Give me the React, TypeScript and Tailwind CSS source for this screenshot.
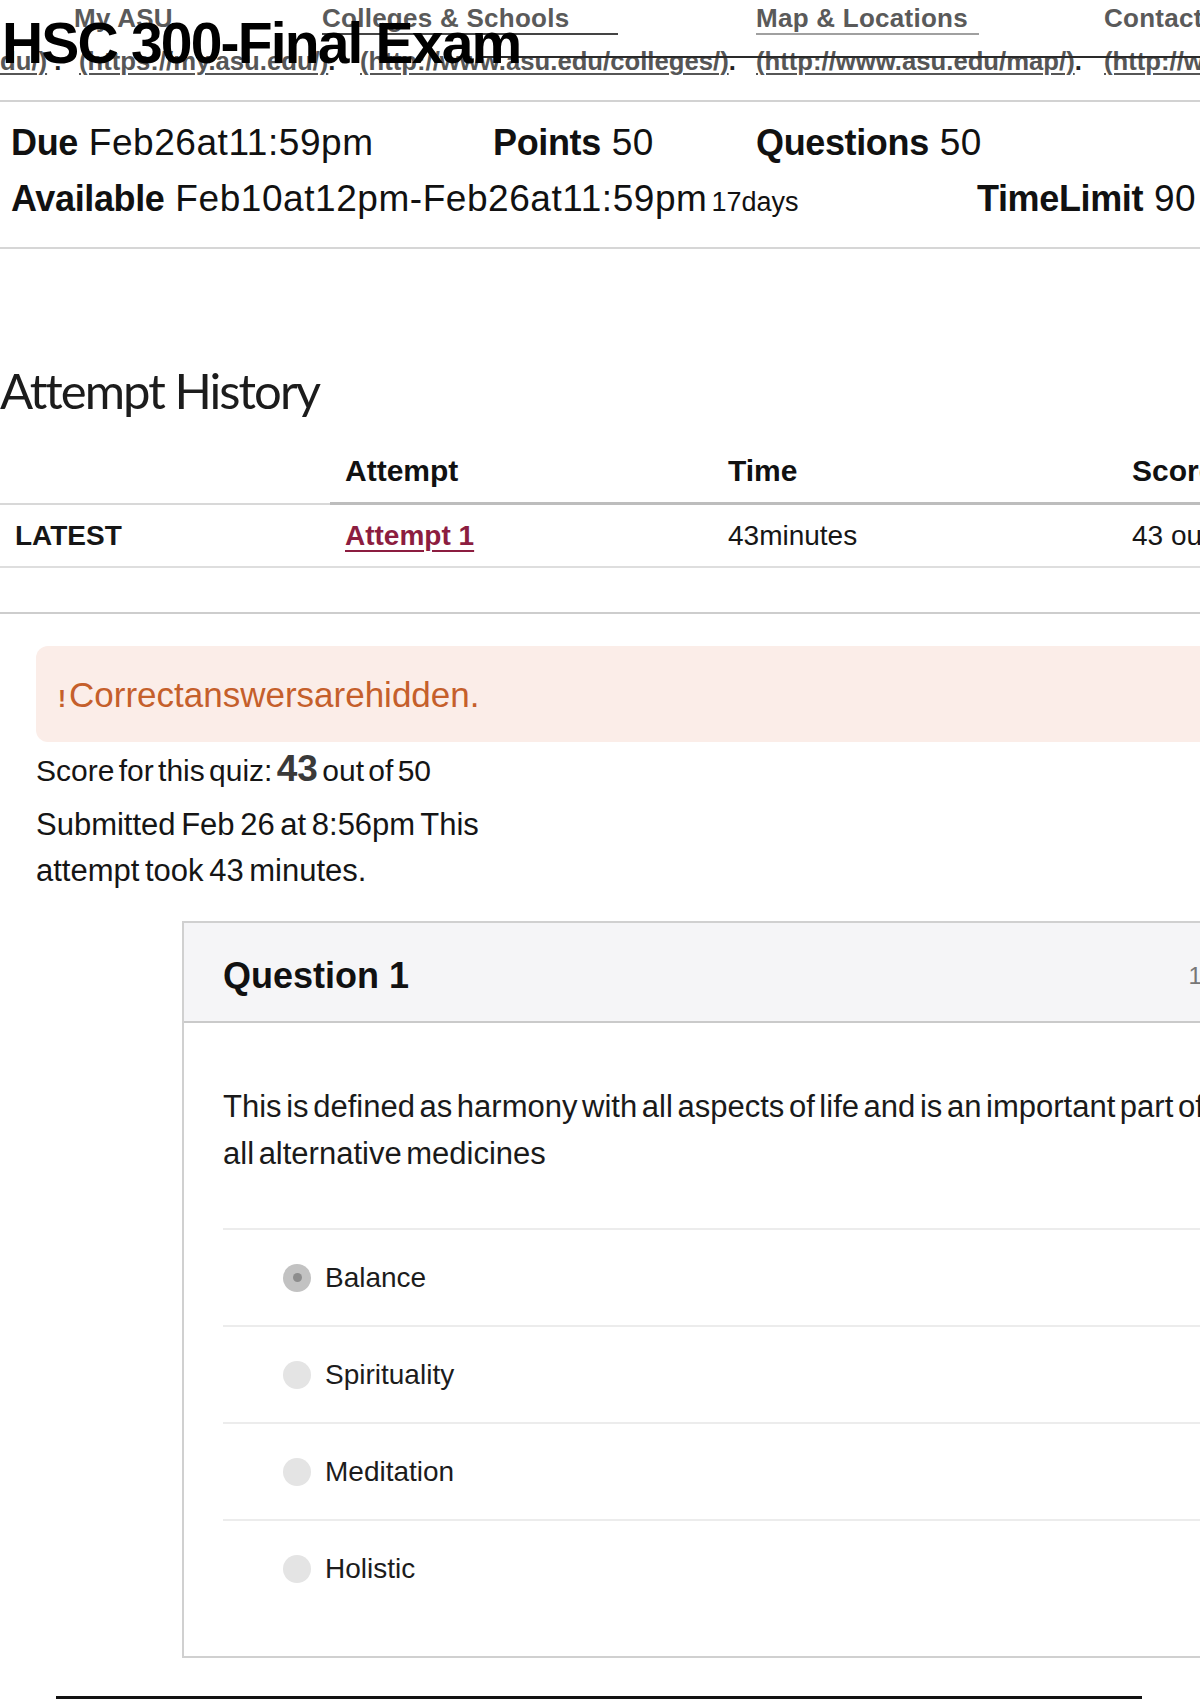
import React from "react";

const sans = "font-['Liberation_Sans',Arial,sans-serif]";

function Header() {
  return (
    <header className="relative h-[102px] border-b-2 border-[#d2d2d2]">
      {/* site navigation labels */}
      <div className="flex pt-[5px] text-[26px] font-bold leading-none tracking-[0.01em] text-[#5a5a5a] whitespace-nowrap">
        <div className="w-[322px] shrink-0 pl-[74px]">My ASU</div>
        <div className="w-[434px] shrink-0">
          <span className="inline-block w-[296px] border-b-2 border-[#444] pb-[2px]">Colleges &amp; Schools</span>
        </div>
        <div className="w-[348px] shrink-0">
          <span className="inline-block w-[223px] border-b-2 border-[#a0a0a0] pb-[2px]">Map &amp; Locations</span>
        </div>
        <div className="shrink-0">Contact</div>
      </div>
      {/* link targets printed under each label */}
      <div className="mt-[14px] flex text-[25.7px] font-bold leading-none text-[#565656] whitespace-nowrap">
        <div className="w-[79px] shrink-0">
          <span className="underline decoration-2 underline-offset-[3px]">du/)</span>
          <span className="text-[#222]"> .</span>
        </div>
        <div className="w-[281px] shrink-0">
          <span className="underline decoration-2 underline-offset-[3px]">(https://my.asu.edu/)</span>
          <span className="text-[#222]">.</span>
        </div>
        <div className="w-[396px] shrink-0">
          <span className="underline decoration-2 underline-offset-[3px]">(http://www.asu.edu/colleges/)</span>
          <span className="text-[#222]">.</span>
        </div>
        <div className="w-[348px] shrink-0">
          <span className="underline decoration-2 underline-offset-[3px]">(http://www.asu.edu/map/)</span>
          <span className="text-[#222]">.</span>
        </div>
        <div className="shrink-0">
          <span className="underline decoration-2 underline-offset-[3px]">(http://www.asu.edu/contactasu/)</span>
        </div>
      </div>
      <div className="absolute left-[480px] right-0 top-[56px] h-[2px] bg-[#2a2a2a]" />
      <h1 className="absolute left-[2px] top-[15px] text-[57px] font-bold leading-none tracking-[-0.032em] text-black whitespace-nowrap">
        HSC 300-Final Exam
      </h1>
    </header>
  );
}

function Details() {
  return (
    <section className="border-b-2 border-[#d6d6d6] pl-[11px] pt-[22px] pb-[30px] text-[37px] leading-none tracking-[0.015em] text-[#111] whitespace-nowrap">
      <div className="flex items-baseline">
        <div className="w-[482px] shrink-0">
          <b className="text-[36px] tracking-[-0.01em]">Due</b> Feb26at11:59pm
        </div>
        <div className="w-[263px] shrink-0">
          <b className="text-[36px] tracking-[-0.01em]">Points</b> 50
        </div>
        <div className="shrink-0">
          <b className="text-[36px] tracking-[-0.01em]">Questions</b> 50
        </div>
      </div>
      <div className="mt-[19px] flex items-baseline">
        <div className="w-[966px] shrink-0">
          <b className="text-[36px] tracking-[-0.01em]">Available</b> Feb10at12pm-Feb26at11:59pm
          <span className="ml-[4px] text-[27px] tracking-normal">17days</span>
        </div>
        <div className="shrink-0">
          <b className="text-[36px] tracking-[-0.01em]">TimeLimit</b> 90 Minutes
        </div>
      </div>
    </section>
  );
}

function AttemptHistory() {
  return (
    <section>
      <h2 className="mt-[117px] font-['Lato',sans-serif] text-[49px] leading-none tracking-[-0.04em] text-[#1c1c1c]">
        Attempt History
      </h2>
      <div className="mt-[24px] whitespace-nowrap">
        <div className="grid grid-cols-[330px_383px_404px_1fr] text-[30px] font-bold leading-none text-[#111]">
          <div className="h-[66px] border-b-2 border-[#d8d8d8]" />
          <div className="flex h-[66px] items-end border-b-[3px] border-[#bdbdbd] pb-[16px] pl-[15px]">Attempt</div>
          <div className="flex h-[66px] items-end border-b-[3px] border-[#bdbdbd] pb-[16px] pl-[15px]">Time</div>
          <div className="flex h-[66px] items-end border-b-[3px] border-[#bdbdbd] pb-[16px] pl-[15px]">Score</div>
        </div>
        <div className="grid h-[63px] grid-cols-[330px_383px_404px_1fr] items-center border-b-2 border-[#dedede] text-[28px] leading-none text-[#161616]">
          <div className="pl-[15px] font-bold">LATEST</div>
          <div className="pl-[15px]">
            <span className="font-bold text-[#8c1d40] underline decoration-2 underline-offset-[5px]">Attempt 1</span>
          </div>
          <div className="pl-[15px]">43minutes</div>
          <div className="pl-[15px]">43 out of 50</div>
        </div>
      </div>
      <div className="mt-[44px] h-[2px] bg-[#cdcdcd]" />
    </section>
  );
}

function Results() {
  return (
    <section className="pl-[36px]">
      <div className="mt-[32px] flex h-[96px] w-[1200px] items-center rounded-[12px] bg-[#fbede8] pl-[22px] text-[35px] leading-none text-[#c55f2b] whitespace-nowrap">
        <span className="mt-[10px] mr-[3px] text-[24px] font-bold">!</span>
        <span>Correctanswersarehidden.</span>
      </div>
      <div className="mt-[8px] text-[30px] leading-none [word-spacing:-4px] text-[#151515] whitespace-nowrap">
        Score for this quiz: <span className="text-[37px] font-bold text-[#3a3a3a]">43</span> out of 50
      </div>
      <p className="mt-[15px] text-[31px] leading-[46px] [word-spacing:-3px] text-[#151515] whitespace-nowrap">
        Submitted Feb 26 at 8:56pm This
        <br />
        attempt took 43 minutes.
      </p>
    </section>
  );
}

const answers = ["Balance", "Spirituality", "Meditation", "Holistic"];

function Radio({ picked }: { picked: boolean }) {
  if (picked) {
    return (
      <span className="flex h-[28px] w-[28px] items-center justify-center rounded-full bg-[#c2c2c2]">
        <span className="h-[9px] w-[9px] rounded-full bg-[#8d8d8d]" />
      </span>
    );
  }
  return <span className="h-[28px] w-[28px] rounded-full bg-[#e4e4e4]" />;
}

function QuestionCard() {
  return (
    <section className="ml-[182px] mt-[27px] w-[1100px] border-2 border-r-0 border-[#d0d0d0]">
      <div className="flex h-[100px] items-center justify-between border-b-2 border-[#cacaca] bg-[#f5f5f7] pl-[39px] pt-[8px]">
        <span className="text-[36px] font-bold leading-none text-[#111]">Question 1</span>
        <span className="mr-[8px] text-[24px] leading-none text-[#777] whitespace-nowrap">1 / 1 pts</span>
      </div>
      <div className="pl-[39px] pt-[60px] pb-[40px]">
        <p className="text-[31px] leading-[47px] [word-spacing:-4px] text-[#1a1a1a] whitespace-nowrap">
          This is defined as harmony with all aspects of life and is an important part of
          <br />
          all alternative medicines
        </p>
        <ul className="mt-[51px]">
          {answers.map((a, i) => (
            <li key={a} className="flex h-[97px] items-center border-t-2 border-[#ececec] pl-[60px]">
              <Radio picked={i === 0} />
              <span className="ml-[14px] text-[28px] leading-none text-[#1c1c1c]">{a}</span>
            </li>
          ))}
        </ul>
      </div>
    </section>
  );
}

export default function App() {
  return (
    <div className={`h-[1700px] w-[1200px] overflow-hidden bg-white ${sans}`}>
      <Header />
      <Details />
      <AttemptHistory />
      <Results />
      <QuestionCard />
      <div className="ml-[56px] mt-[38px] h-[3px] w-[1086px] bg-[#111]" />
    </div>
  );
}
